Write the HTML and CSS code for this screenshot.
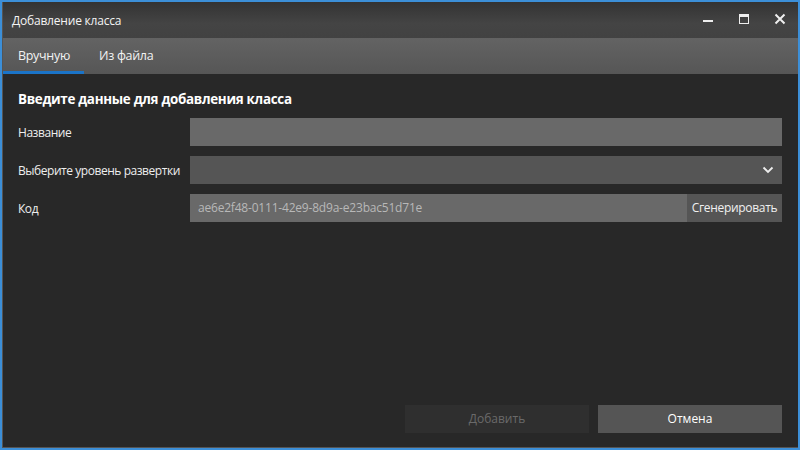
FILE: index.html
```html
<!DOCTYPE html>
<html lang="ru">
<head>
    <meta charset="UTF-8">
    <title>Добавление класса</title>
    <link rel="stylesheet" href="styles.css">
</head>
<body>
    <div class="win">
        <div class="title">
            <span class="ttl">Добавление класса</span>
            <div class="ctl">
                <svg width="36" height="20" viewBox="0 0 36 20"><rect x="13" y="10" width="10" height="2" fill="#eee"/></svg>
                <svg width="36" height="20" viewBox="0 0 36 20"><rect x="13.5" y="4.5" width="9" height="9" fill="none" stroke="#eee"/><rect x="13" y="4" width="10" height="3" fill="#eee"/></svg>
                <svg width="36" height="20" viewBox="0 0 36 20"><path d="M13.5 4.5l9 9M22.5 4.5l-9 9" stroke="#eee" stroke-width="2"/></svg>
            </div>
        </div>
        <div class="tabs">
            <div class="tab act">Вручную</div>
            <div class="tab">Из файла</div>
        </div>
        <div class="body">
            <h1>Введите данные для добавления класса</h1>
            <div class="row">
                <label>Название</label>
                <div class="inp"></div>
            </div>
            <div class="row">
                <label>Выберите уровень развертки</label>
                <div class="inp sel">
                    <svg width="12" height="8" viewBox="0 0 12 8"><path d="M1.5 1.5l4.5 4.5 4.5-4.5" fill="none" stroke="#eee" stroke-width="1.8"/></svg>
                </div>
            </div>
            <div class="row">
                <label>Код</label>
                <div class="inp code">ae6e2f48-0111-42e9-8d9a-e23bac51d71e</div>
                <div class="gen">Сгенерировать</div>
            </div>
            <div class="foot">
                <div class="btn dis">Добавить</div>
                <div class="btn">Отмена</div>
            </div>
        </div>
    </div>
</body>
</html>
```

FILE: styles.css
```css
*{
    margin:0;
    padding:0;
    box-sizing:border-box;
}
body{
    width:800px;
    height:450px;
    background:#3c8fd8;
    font-family:"Open Sans","Noto Sans",sans-serif;
    color:#f0f0f0;
}
.win{
    margin:2px;
    height:446px;
    display:flex;
    flex-direction:column;
    background:#282828;
    border-left:1px solid #555;
    border-bottom:1px solid #555;
}
.title{
    height:36px;
    display:flex;
    align-items:center;
    justify-content:space-between;
    background:linear-gradient(#333,#444 60%,#424242);
    padding-left:9px;
}
.ttl{
    font-size:12px;
    letter-spacing:-0.2px;
    color:#f4f4f4;
}
.ctl{
    display:flex;
    align-items:center;
}
.ctl svg{
    display:block;
}
.tabs{
    height:36px;
    display:flex;
    background:linear-gradient(#636363,#565656);
}
.tab{
    font-size:12.5px;
    letter-spacing:-0.3px;
    padding:0 16px 0 15px;
    line-height:36px;
    color:#f2f2f2;
}
.act{
    border-bottom:3px solid #1b74c8;
    width:81px;
}
.body{
    flex:1;
    display:flex;
    flex-direction:column;
    padding:16px 16px 14px 15px;
}
h1{
    font-size:13.4px;
    font-weight:700;
    letter-spacing:-0.3px;
    color:#fff;
    margin-bottom:10px;
}
.row{
    display:flex;
    align-items:center;
    height:28px;
    margin-bottom:10px;
}
label{
    width:172px;
    font-size:12px;
    letter-spacing:-0.45px;
    color:#eee;
}
.inp{
    flex:1;
    height:28px;
    background:#696969;
}
.sel{
    background:#555;
    display:flex;
    align-items:center;
    justify-content:flex-end;
    padding-right:8px;
}
.sel svg{
    display:block;
}
.code{
    font-size:12px;
    letter-spacing:-0.2px;
    color:#b8b8b8;
    line-height:28px;
    padding-left:8px;
}
.gen{
    width:95px;
    height:28px;
    background:#555;
    font-size:12px;
    letter-spacing:-0.3px;
    line-height:28px;
    text-align:center;
    color:#f0f0f0;
}
.foot{
    margin-top:auto;
    display:flex;
    justify-content:flex-end;
    gap:9px;
}
.btn{
    width:184px;
    height:28px;
    background:#555;
    font-size:12px;
    line-height:28px;
    text-align:center;
    color:#fff;
}
.dis{
    background:#2f2f2f;
    color:#6a6a6a;
}
```
